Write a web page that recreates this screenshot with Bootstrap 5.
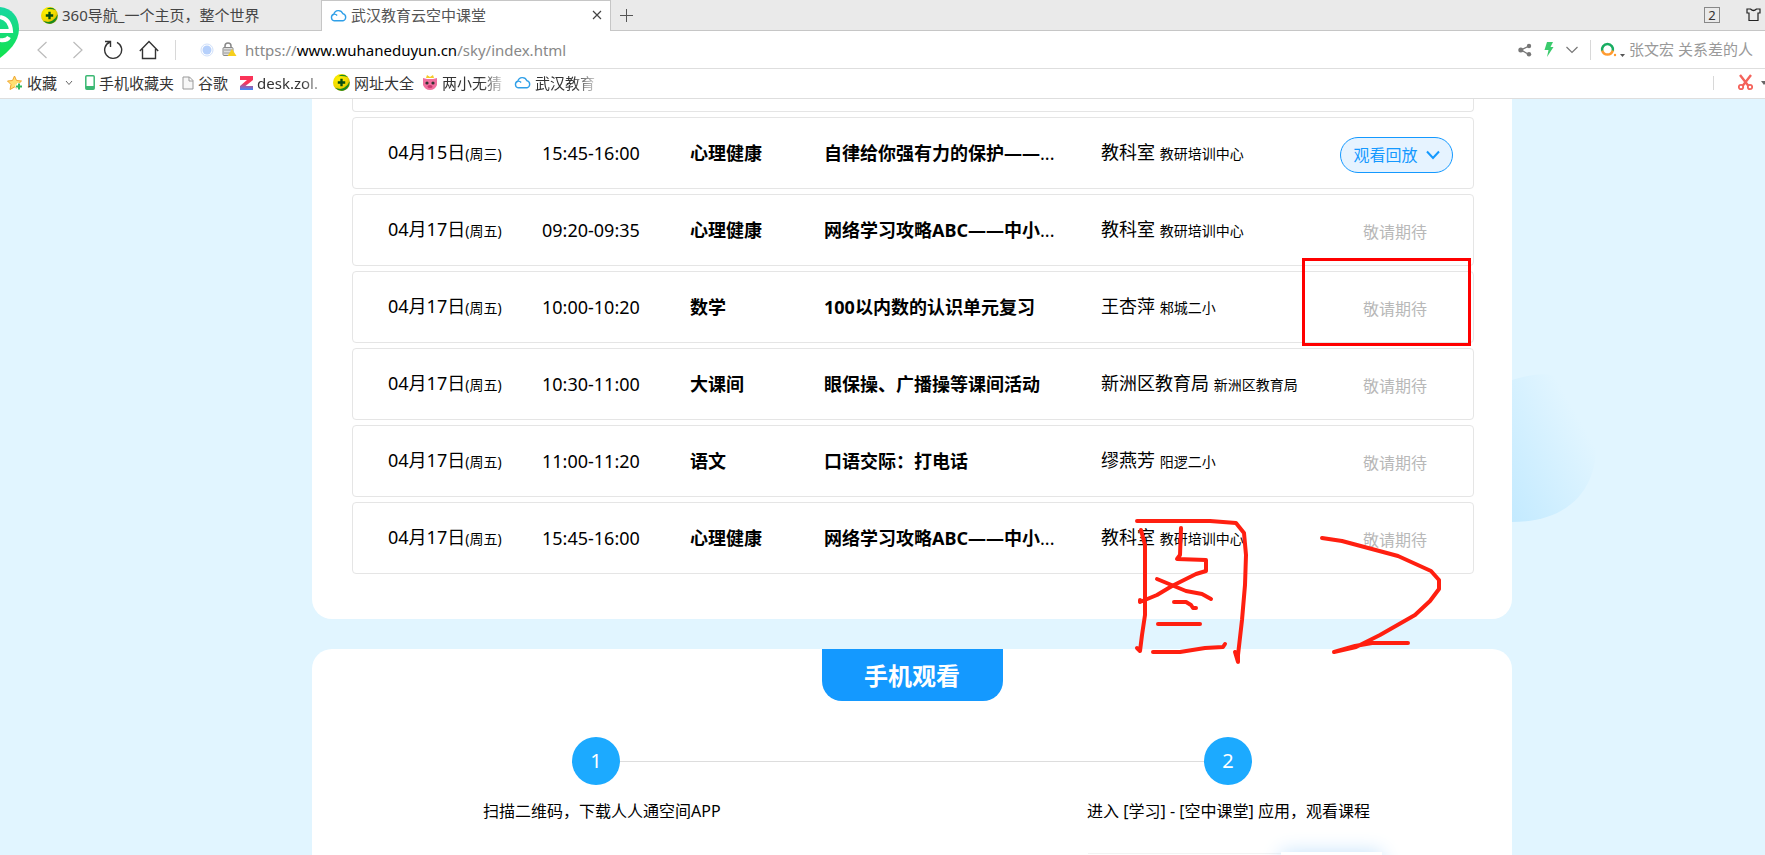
<!DOCTYPE html>
<html lang="zh-CN">
<head>
<meta charset="utf-8">
<meta name="viewport" content="width=device-width, initial-scale=1">
<title>武汉教育云空中课堂</title>
<link href="https://cdn.jsdelivr.net/npm/bootstrap@5.3.0/dist/css/bootstrap.min.css" rel="stylesheet">
<style>
body{font-family:"Noto Sans","Noto Sans CJK SC",sans-serif;font-size:15px;line-height:20px;color:#000;background:#fff;overflow:hidden}
svg{flex:none;display:block}
button{background:none;border:0;padding:0;color:inherit}
.mid-punct{font-family:"Noto Sans CJK TC",sans-serif;line-height:1}
.tabs-strip{height:31px;background:#eaeaea;color:#444}
.tab-item{border-bottom:1px solid #c6c6c6;color:#444}
.tab-first{width:321px;padding-left:41px}
.tab-open{width:290px;background:#fff;border:1px solid #c6c6c6;border-bottom:0;padding:0 8px 2px 8px;color:#555}
.window-count{width:16px;height:16px;border:1px solid #888;font-size:13px;line-height:14px;text-align:center;color:#333}
.address-bar{height:38px;border-bottom:1px solid #dedede;padding-left:37px}
.vline{width:1px;background:#d8d8d8;flex:none}
.url-box{font-size:15px;color:#888;outline:0}
.url-box b{font-weight:400;color:#000}
.search-box{width:136px;border:0;padding:0 0 2px;background:none;outline:0}
.search-box::placeholder{color:#999;opacity:1}
.fav-bar{height:30px;border-bottom:1px solid #dedede;padding:0 0 2px 7px}
.fav-bar a{color:#333;text-decoration:none;display:flex;align-items:center;gap:4px}
.fade-end{-webkit-mask-image:linear-gradient(90deg,#000 65%,rgba(0,0,0,.25))}
.browser-logo{left:0;top:6px;z-index:3}
.page-view{background:#e1f5ff;padding-left:59px}
.sheet{position:relative;max-width:1200px;background:#fff;border-radius:0 0 20px 20px}
.blob{position:absolute;left:100%;top:275px}
.lessons{padding:0 38px 45px 40px}
.lesson{height:72px;border:1px solid #e5e5e5;border-radius:4px;margin-bottom:5px;padding:0 20px 0 35px;display:grid;grid-template-columns:154fr 148fr 134fr 277fr 239fr 113fr;align-items:center;font-size:18px;line-height:28px;white-space:nowrap}
.lesson>*{min-width:0}
.lesson-cut{height:13px;border-top:0;border-radius:0 0 4px 4px}
.note{font-size:14px}
.wait{font-size:16px;color:#b8b8b8;padding:4px 3px 0 0;text-align:center}
.replay{height:36px;border:1px solid #1499ff;border-radius:18px;background:#e6f3ff;color:#1499ff;font-size:16px;margin-top:4px}
.marks{position:absolute;left:0;top:0;z-index:2;pointer-events:none}
.phone-sheet{margin-top:30px;border-radius:20px;height:240px}
.ribbon{width:181px;height:52px;background:#1499ff;border-radius:0 0 20px 20px;color:#fff;font-size:24px;font-weight:700;line-height:54px;text-align:center}
.step-line{padding:36px 260px 0}
.step-no{width:48px;height:48px;border-radius:50%;background:#1caaff;color:#fff;font-size:20px;line-height:48px;text-align:center}
.step-rule{height:1px;background:#ddd}
.step-text{padding:16px 142px 0 171px;font-size:16px}
.shots{padding:31px 130px 0 776px}
.shot-side{height:40px;margin-top:1px;border-top:1px solid #f3f3f3}
.shot-main{width:101px;height:40px;background:#fff;box-shadow:0 0 20px #c4e2fb}
</style>
</head>
<body class="vh-100 d-flex flex-column">
<svg width="0" height="0" class="position-absolute" aria-hidden="true">
<defs>
<symbol id="cloud" viewBox="0 0 16 12"><path d="M4 11A3.2 3.2 0 0 1 3.6 4.8 4.4 4.4 0 0 1 12 4.2 3.5 3.5 0 0 1 12.2 11Z M3.6 4.8Q5.4 4.4 6.7 6" fill="none" stroke="#2f9fe8" stroke-width="1.3"/></symbol>
<radialGradient id="gold" cx=".35" cy=".3" r=".8"><stop offset="0" stop-color="#fff200"/><stop offset=".6" stop-color="#f0d800"/><stop offset="1" stop-color="#c09a00"/></radialGradient>
<symbol id="plus" viewBox="0 0 16 16"><circle cx="8" cy="8" r="8" fill="url(#gold)"/><path d="M5 2Q10-1 14 3Q10 1.500 5 2ZM15.500 7Q16 13 10 15.500Q5 16.500 2 13Q7 15 10.500 13Q14 11 15.500 7Z" fill="#178a20"/><path d="M8 4.500v7M4.500 8h7" stroke="#064b12" stroke-width="2.200"/></symbol>
<linearGradient id="green" x2="0" y2="1"><stop offset="0" stop-color="#17d7a2"/><stop offset="1" stop-color="#12e34d"/></linearGradient>
<linearGradient id="sky" x1="0" y1="1" x2="1" y2="0"><stop offset="0" stop-color="#c3eaff"/><stop offset=".75" stop-color="#e1f5ff"/></linearGradient>
<linearGradient id="zed" x2="0" y2="1"><stop offset=".5" stop-color="#fa3358"/><stop offset="1" stop-color="#3a8cff"/></linearGradient>
</defs>
</svg>

<header class="position-relative flex-shrink-0 text-nowrap overflow-hidden">
<svg class="browser-logo position-absolute" width="20" height="52" viewBox="0 0 20 52" aria-label="浏览器"><path d="M0 1C12 2 19 11 19 23C19 36 8 46 0 52Z" fill="url(#green)"/><path d="M0 11Q10 13 11 25H0M0 34Q7 35 9 31" fill="none" stroke="#fff" stroke-width="4"/></svg>
<div class="tabs-strip d-flex align-items-stretch">
<div class="tab-item tab-first d-flex align-items-center gap-1"><svg width="17" height="17"><use href="#plus"/></svg><span>360导航_一个主页<span class="mid-punct">，</span>整个世界</span></div>
<div class="tab-open d-flex align-items-center"><svg width="17" height="13" class="me-1"><use href="#cloud"/></svg><span>武汉教育云空中课堂</span>
<button type="button" class="ms-auto" aria-label="关闭标签页"><svg width="10" height="10"><path d="M1 1l8 8M9 1L1 9" stroke="#444" stroke-width="1.200"/></svg></button></div>
<div class="tab-item flex-grow-1 d-flex align-items-center ps-2 pe-1">
<button type="button" aria-label="新建标签页"><svg width="15" height="13"><path d="M1 6.500h13M7.500 0v13" stroke="#555"/></svg></button>
<button type="button" class="window-count ms-auto me-4">2</button>
<button type="button" aria-label="皮肤"><svg width="17" height="14" viewBox="0 0 17 14"><path d="M6.500 1Q9.500 4 12.500 1H16V5H14V12.500H5V5H3V1Z" fill="none" stroke="#222" stroke-width="1.200"/></svg></button>
</div>
</div>
<div class="address-bar d-flex align-items-center">
<button type="button" aria-label="后退"><svg width="10" height="18"><path d="M9.500 1L1 9l8.500 8" fill="none" stroke="#bbb" stroke-width="1.200"/></svg></button>
<button type="button" class="ps-4" aria-label="前进"><svg width="12" height="18"><path d="M2.500 1L11 9l-8.500 8" fill="none" stroke="#bbb" stroke-width="1.200"/></svg></button>
<button type="button" class="ps-3 ms-1" aria-label="刷新"><svg width="20" height="20"><path d="M7 2A8.500 8.500 0 1 0 14 2.300M2 1.500H7.500V7" fill="none" stroke="#333" stroke-width="1.400"/></svg></button>
<button type="button" class="ps-3" aria-label="主页"><svg width="20" height="20"><path d="M.8 11L10 1.500L19.200 11M3.500 9V18.500H16.500V9" fill="none" stroke="#333" stroke-width="1.400"/></svg></button>
<span class="vline ms-3 me-4" style="height:20px"></span>
<svg width="14" height="14" class="me-2"><circle cx="7" cy="7" r="6" fill="none" stroke="#cfdffa"/><circle cx="7" cy="7" r="4.500" fill="#b6d0fb"/></svg>
<svg width="15" height="15" class="me-2" viewBox="0 0 15 15"><path d="M3 6V4a3 3 0 0 1 6 0v2" fill="none" stroke="#888" stroke-width="1.500"/><rect x="1" y="5.500" width="10" height="8" rx="1" fill="#ddd" stroke="#888"/><path d="M2 8h8M2 11h8" stroke="#999"/><path d="M10 7l4.500 7h-9z" fill="#f6cf1c"/></svg>
<div class="url-box flex-grow-1" role="textbox" contenteditable="true" spellcheck="false" aria-label="地址">https://<b>www.wuhaneduyun.cn</b>/sky/index.html</div>
<button type="button" class="me-2" aria-label="分享"><svg width="14" height="14"><path d="M11 3L3 7l8 4.500" fill="none" stroke="#777" stroke-width="1.300"/><circle cx="11" cy="3" r="2.200" fill="#777"/><circle cx="2.800" cy="7" r="2.500" fill="#777"/><circle cx="11" cy="11.300" r="2.200" fill="#777"/></svg></button>
<button type="button" class="ms-1 me-2" aria-label="加速"><svg width="10" height="15"><path d="M3 0H9L6.500 5H9.500L3 15L4.500 8H.5Z" fill="#3bcb6d"/></svg></button>
<button type="button" class="ms-1 me-2" aria-label="更多"><svg width="12" height="8"><path d="M.5 1L6 6.500L11.500 1" fill="none" stroke="#777" stroke-width="1.200"/></svg></button>
<span class="vline ms-1 me-2" style="height:20px"></span>
<label for="query" class="d-flex align-items-center me-1"><svg width="26" height="16"><path d="M3.200 9A5.500 5.500 0 1 1 13.800 9" fill="none" stroke="#18ad62" stroke-width="2.600"/><path d="M3.200 8.500A5.500 5.500 0 0 0 13.800 8.500" fill="none" stroke="#ff9b2f" stroke-width="2.600"/><circle cx="16" cy="13" r="1.200" fill="#ff9b2f"/><path d="M21 12h5l-2.500 3z" fill="#555"/></svg></label>
<input id="query" class="search-box" type="text" placeholder="张文宏 关系差的人">
</div>
<nav class="fav-bar d-flex align-items-center" aria-label="收藏栏">
<a href="#"><svg width="16" height="16"><path d="M7.500 1l2 4.500 5 .5-3.700 3.500 1 5-4.300-2.500L3 14.500l1-5L.5 6l5-.5z" fill="#ffdf72" stroke="#efa52f"/><path d="M12 8v7M8.500 11.500h7" stroke="#fff" stroke-width="4"/><path d="M12 8.500v6M9 11.500h6" stroke="#31b85f" stroke-width="2"/></svg><span>收藏</span></a>
<svg width="8" height="6" class="ms-2"><path d="M1 1l3 3.500L7 1" fill="none" stroke="#666"/></svg>
<a href="#" class="ms-2 ps-1"><svg width="10" height="15"><rect x=".8" y=".8" width="8.400" height="13.400" rx="1" fill="#fff" stroke="#3bb873" stroke-width="1.500"/><path d="M1 12.500h8" stroke="#3bb873" stroke-width="3"/></svg><span>手机收藏夹</span></a>
<a href="#" class="ms-2"><svg width="12" height="14"><path d="M1 1h6.500L11 4.500V13H1zM7 1v4h4" fill="#f7f7f7" stroke="#999"/></svg><span>谷歌</span></a>
<a href="#" class="ms-2 ps-1"><svg width="13" height="14"><path d="M0 0H13V4L5.500 10H13V14H0V10L7 4H0Z" fill="url(#zed)"/></svg><span class="fade-end" style="min-width:68px">desk.zol.</span></a>
<a href="#" class="ms-2"><svg width="17" height="17"><use href="#plus"/></svg><span>网址大全</span></a>
<a href="#" class="ms-2"><svg width="16" height="16"><path d="M1 3l4 1h6l4-1v7q-2 5-7 5t-7-5z" fill="#f06e9e"/><path d="M4 3L5 0l3 2 3-2 1 3z" fill="#f5c929"/><circle cx="5" cy="8" r="1.600" fill="#333"/><circle cx="11" cy="8" r="1.600" fill="#333"/><ellipse cx="8" cy="11.500" rx="2.500" ry="1.500" fill="#c9386f"/></svg><span class="fade-end">两小无猜</span></a>
<a href="#" class="ms-2 ps-1"><svg width="17" height="13"><use href="#cloud"/></svg><span class="fade-end">武汉教育</span></a>
<span class="vline ms-auto me-4" style="height:14px"></span>
<button type="button" class="me-2" aria-label="截图"><svg width="15" height="17"><path d="M2 1l8.500 11M13 1L4.500 12" stroke="#f4635b" stroke-width="2.400"/><circle cx="3" cy="13" r="2.200" fill="none" stroke="#f4635b" stroke-width="1.800"/><circle cx="12" cy="13" r="2.200" fill="none" stroke="#f4635b" stroke-width="1.800"/></svg></button>
<svg width="4" height="4"><path d="M0 0h6l-3 4z" fill="#666"/></svg>
</nav>
</header>

<main class="page-view flex-grow-1 overflow-hidden">
<section class="sheet lessons mx-auto">
<svg class="blob" width="84" height="149" viewBox="0 0 84 149"><path d="M0 6C14 2 26-1 40 1C66 8 84 42 84 73C84 112 60 148 0 148Z" fill="url(#sky)"/></svg>
<div class="lesson lesson-cut"></div>
<div class="lesson"><div>04月15日<span class="note">(周三)</span></div><div>15:45-16:00</div><strong>心理健康</strong><div><strong>自律给你强有力的保护——</strong>...</div><div>教科室 <span class="note">教研培训中心</span></div><button type="button" class="replay d-flex align-items-center justify-content-center gap-2"><span>观看回放</span><svg width="14" height="10"><path d="M1 1.500L7 8L13 1.500" fill="none" stroke="#1499ff" stroke-width="2"/></svg></button></div>
<div class="lesson"><div>04月17日<span class="note">(周五)</span></div><div>09:20-09:35</div><strong>心理健康</strong><div><strong>网络学习攻略ABC——中小</strong>...</div><div>教科室 <span class="note">教研培训中心</span></div><div class="wait">敬请期待</div></div>
<div class="lesson"><div>04月17日<span class="note">(周五)</span></div><div>10:00-10:20</div><strong>数学</strong><strong>100以内数的认识单元复习</strong><div>王杏萍 <span class="note">邾城二小</span></div><div class="wait">敬请期待</div></div>
<div class="lesson"><div>04月17日<span class="note">(周五)</span></div><div>10:30-11:00</div><strong>大课间</strong><strong>眼保操、广播操等课间活动</strong><div>新洲区教育局 <span class="note">新洲区教育局</span></div><div class="wait">敬请期待</div></div>
<div class="lesson"><div>04月17日<span class="note">(周五)</span></div><div>11:00-11:20</div><strong>语文</strong><strong>口语交际<span class="mid-punct">：</span>打电话</strong><div>缪燕芳 <span class="note">阳逻二小</span></div><div class="wait">敬请期待</div></div>
<div class="lesson mb-0"><div>04月17日<span class="note">(周五)</span></div><div>15:45-16:00</div><strong>心理健康</strong><div><strong>网络学习攻略ABC——中小</strong>...</div><div>教科室 <span class="note">教研培训中心</span></div><div class="wait">敬请期待</div></div>
<!-- hand-drawn annotations over the list -->
<svg class="marks" width="1200" height="570" viewBox="312 99 1200 570">
<rect x="1303.500" y="259.500" width="166" height="85" fill="none" stroke="#f00" stroke-width="3"/>
<g fill="none" stroke="#ff1f10" stroke-width="4" stroke-linecap="round" stroke-linejoin="round">
<path d="M1137 521H1210L1236 523L1244 533L1246 555L1245 585L1242 620L1238 655V662L1235 652"/>
<path d="M1141 530L1145 545V615L1142 635L1140 651L1137 648"/>
<path d="M1181 528L1180 555L1177 559L1206 560V571L1196 574L1172 586L1157 595L1140 602V600"/>
<path d="M1157 579L1186 591L1202 594L1211 599"/>
<path d="M1174 602H1186L1191 605L1193 608H1196"/>
<path d="M1158 624H1200"/>
<path d="M1153 652H1180L1205 648L1223 647L1225 644"/>
<path d="M1322 538L1342 541L1398 556L1431 571L1439 580V589L1430 601L1415 615L1380 635L1356 647L1334 652L1355 646L1372 643H1408"/>
</g>
</svg>
</section>
<section class="sheet phone-sheet mx-auto">
<h2 class="ribbon mx-auto mb-0">手机观看</h2>
<div class="step-line d-flex align-items-center"><div class="step-no">1</div><div class="step-rule flex-grow-1"></div><div class="step-no">2</div></div>
<div class="step-text d-flex justify-content-between"><span>扫描二维码<span class="mid-punct">，</span>下载人人通空间APP</span><span>进入 [学习] - [空中课堂] 应用<span class="mid-punct">，</span>观看课程</span></div>
<div class="shots d-flex"><div class="shot-side flex-grow-1"></div><div class="shot-main"></div></div>
</section>
</main>
<script src="https://cdn.jsdelivr.net/npm/bootstrap@5.3.0/dist/js/bootstrap.bundle.min.js"></script>
</body>
</html>
